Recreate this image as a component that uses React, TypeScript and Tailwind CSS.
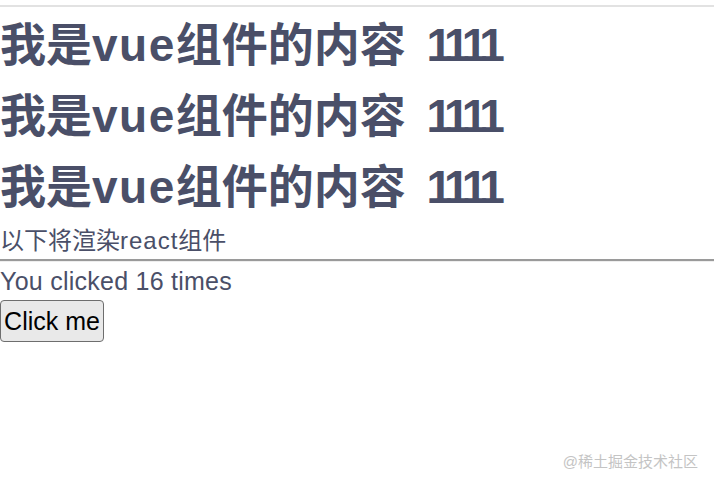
export default function App() {
  return (
    <div
      className="relative w-[714px] h-[486px] bg-white overflow-hidden text-[#4a4f68]"
      style={{ fontFamily: '"Liberation Sans", "Noto Sans CJK SC", sans-serif' }}
    >
      <div className="mt-[5px] h-[2px] bg-[#e2e2e2]" />
      <div className="pt-[3px]">
        {[0, 1, 2].map((i) => (
          <h1 key={i} className="m-0 text-[46px] font-bold leading-[71px] whitespace-nowrap">
            我是<span className="tracking-[1.5px]">vue</span>组件的内容{" "}
            <span className="ml-[8px] tracking-[-5.5px]">1111</span>
          </h1>
        ))}
      </div>
      <div className="text-[24px] leading-[36px]">
        以下将渲染<span className="tracking-[1px]">react</span>组件
      </div>
      <div className="border-t-[2px] border-t-[#9a9a9a] border-b border-b-[#eeeeee]" />
      <div className="text-[25px] leading-[38px] tracking-[0.25px]">You clicked 16 times</div>
      <button className="h-[42px] w-[104px] rounded-[4px] border-[1.5px] border-[#6e6e6e] bg-[#e9e9e9] text-[25px] leading-none text-black">
        Click me
      </button>
      <div className="absolute right-[16px] top-[451px] text-[15px] text-[#c4c4c4]">
        @稀土掘金技术社区
      </div>
    </div>
  );
}
